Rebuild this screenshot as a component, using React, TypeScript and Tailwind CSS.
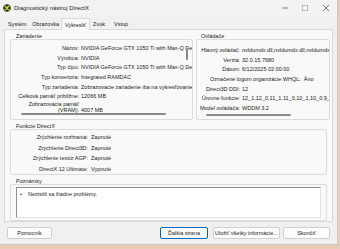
import React from "react";

const Row = ({ label, value, lw }: { label: string; value: string; lw: string }) => (
  <div className="flex items-center h-[9.7px] whitespace-nowrap">
    <div className={`${lw} text-right pr-[2px] shrink-0`}>{label}</div>
    <div>{value}</div>
  </div>
);

function DxIcon() {
  return (
    <svg width="8" height="8" viewBox="0 0 16 16">
      <circle cx="8" cy="8" r="7.5" fill="#2d2d1a" />
      <path d="M4 4 L12 12 M12 4 L4 12" stroke="#c8d42a" strokeWidth="3" strokeLinecap="round" />
      <circle cx="8" cy="8" r="2" fill="#e6ef3a" />
    </svg>
  );
}

export default function App() {
  return (
    <div className="w-[340px] h-[249px] bg-[#e7cdb6] overflow-hidden font-['Liberation_Sans',Arial,sans-serif] text-[#1b1b1b]">
      <div className="w-[338px] h-[245px] bg-[#f0f0f0] border-b border-r border-[#c9c9c9] flex flex-col">
        {/* title bar */}
        <div className="h-[16px] flex items-center pl-[3px] bg-[#f3f3f3]">
          <DxIcon />
          <span className="ml-[3px] text-[6px] leading-[6px]">Diagnostický nástroj DirectX</span>
          <div className="ml-auto flex items-center h-full">
            <div className="w-[20px] flex justify-center">
              <svg width="6" height="6" viewBox="0 0 10 10"><path d="M0 5 H10" stroke="#333" strokeWidth="1" /></svg>
            </div>
            <div className="w-[20px] flex justify-center">
              <svg width="6" height="6" viewBox="0 0 10 10"><rect x="0.5" y="0.5" width="9" height="9" fill="none" stroke="#999" strokeWidth="1" /></svg>
            </div>
            <div className="w-[22px] flex justify-center">
              <svg width="6" height="6" viewBox="0 0 10 10"><path d="M0 0 L10 10 M10 0 L0 10" stroke="#333" strokeWidth="1" /></svg>
            </div>
          </div>
        </div>
        {/* tabs */}
        <div className="h-[13px] flex items-end pl-[4px] text-[5.5px] leading-[6px]">
          <div className="px-[4px] h-[11px] flex items-center">Systém</div>
          <div className="px-[2px] h-[11px] flex items-center">Obrazovka</div>
          <div className="px-[3px] h-[12px] flex items-center bg-[#f9f9f9] border border-b-0 border-[#d9d9d9] relative top-[1px]">Vykresliť</div>
          <div className="px-[3px] h-[11px] flex items-center">Zvuk</div>
          <div className="px-[6px] h-[11px] flex items-center">Vstup</div>
        </div>
        {/* panel */}
        <div className="mx-[4px] h-[193px] border border-[#d9d9d9] bg-[#f9f9f9] px-[5px] pt-[3px] text-[5.5px] leading-[6px] flex flex-col">
          <div className="flex gap-[3px]">
            {/* Zariadenie */}
            <div className="w-[183px] flex flex-col">
              <div className="pl-[6px] h-[6px]">Zariadenie</div>
              <div className="relative h-[81px] border border-[#dcdcdc] rounded-[2px] overflow-hidden pt-[3px]">
                <Row lw="w-[70px]" label="Názov:" value="NVIDIA GeForce GTX 1050 Ti with Max-Q Design" />
                <Row lw="w-[70px]" label="Výrobca:" value="NVIDIA" />
                <Row lw="w-[70px]" label="Typ čipu:" value="NVIDIA GeForce GTX 1050 Ti with Max-Q Design" />
                <Row lw="w-[70px]" label="Typ konvertora:" value="Integrated RAMDAC" />
                <Row lw="w-[70px]" label="Typ zariadenia:" value="Zobrazovacie zariadenie iba na vykresľovanie" />
                <Row lw="w-[70px]" label="Celková pamäť približne:" value="12066 MB" />
                <div className="flex items-end whitespace-nowrap">
                  <div className="w-[70px] text-right pr-[2px] shrink-0 leading-[6px]">
                    Zobrazovacia pamäť
                    <br />
                    (VRAM):
                  </div>
                  <div className="leading-[6px]">4007 MB</div>
                </div>
                <div className="absolute left-[10px] bottom-[4px] w-[145px] h-[2px] rounded-full bg-[#8a8a8a]" />
                <div className="absolute right-[4px] top-[8px] w-[2px] h-[12px] rounded-full bg-[#8a8a8a]" />
              </div>
            </div>
            {/* Ovládače */}
            <div className="w-[134px] flex flex-col">
              <div className="pl-[5px] h-[6px]">Ovládače</div>
              <div className="relative h-[81px] border border-[#dcdcdc] rounded-[2px] overflow-hidden pt-[5px]">
                <Row lw="w-[45px]" label="Hlavný ovládač:" value="nvldumdx.dll,nvldumdx.dll,nvldumdx.dll" />
                <Row lw="w-[45px]" label="Verzia:" value="32.0.15.7680" />
                <Row lw="w-[45px]" label="Dátum:" value="6/12/2025 02:00:00" />
                <div className="flex items-center h-[9.7px] whitespace-nowrap pl-[13px]">Označené logom organizácie WHQL:&nbsp;&nbsp;Áno</div>
                <Row lw="w-[45px]" label="Direct3D DDI:" value="12" />
                <Row lw="w-[45px]" label="Úrovne funkcie:" value="12_1,12_0,11_1,11_0,10_1,10_0,9_3" />
                <Row lw="w-[45px]" label="Model ovládača:" value="WDDM 3.2" />
                <div className="absolute left-[9px] bottom-[3px] w-[85px] h-[2px] rounded-full bg-[#8a8a8a]" />
              </div>
            </div>
          </div>
          {/* Funkcie DirectX */}
          <div className="mt-[3px] pl-[6px] h-[6px]">Funkcie DirectX</div>
          <div className="h-[46px] border border-[#dcdcdc] rounded-[2px] pt-[2px]">
            <div className="flex items-center h-[10.6px] whitespace-nowrap"><div className="w-[80px] text-right pr-[3px]">Zrýchlenie rozhrania:</div><div>Zapnuté</div></div>
            <div className="flex items-center h-[10.6px] whitespace-nowrap"><div className="w-[80px] text-right pr-[3px]">Zrýchlenie Direct3D:</div><div>Zapnuté</div></div>
            <div className="flex items-center h-[10.6px] whitespace-nowrap"><div className="w-[80px] text-right pr-[3px]">Zrýchlenie textúr AGP:</div><div>Zapnuté</div></div>
            <div className="flex items-center h-[10.6px] whitespace-nowrap"><div className="w-[80px] text-right pr-[3px]">DirectX 12 Ultimate:</div><div>Vypnuté</div></div>
          </div>
          {/* Poznámky */}
          <div className="mt-[3px] pl-[6px] h-[6px]">Poznámky</div>
          <div className="h-[37px] border border-[#dcdcdc] rounded-[2px] p-[2px] px-[5px]">
            <div className="h-[31px] bg-white border-l border-t border-[#8f8f8f] border-r-[#e3e3e3] border-b-[#e3e3e3] border-r border-b pl-[3px] pt-[3px] flex gap-[6px]">
              <span>•</span>
              <span>Nezistili sa žiadne problémy.</span>
            </div>
          </div>
        </div>
        {/* buttons */}
        <div className="flex items-start pt-[5px] pl-[7px] text-[5.5px] leading-[6px]">
          <div className="w-[45px] h-[12px] flex items-center justify-center bg-[#fdfdfd] border border-[#d0d0d0] rounded-[2px]">Pomocník</div>
          <div className="ml-[108px] w-[48px] h-[12px] flex items-center justify-center bg-[#fdfdfd] border border-[#0067c0] rounded-[2px]">Ďalšia strana</div>
          <div className="ml-[5px] w-[67px] h-[12px] flex items-center justify-center bg-[#fdfdfd] border border-[#d0d0d0] rounded-[2px]">Uložiť všetky informácie...</div>
          <div className="ml-[3px] w-[47px] h-[12px] flex items-center justify-center bg-[#fdfdfd] border border-[#d0d0d0] rounded-[2px]">Skončiť</div>
        </div>
      </div>
    </div>
  );
}
